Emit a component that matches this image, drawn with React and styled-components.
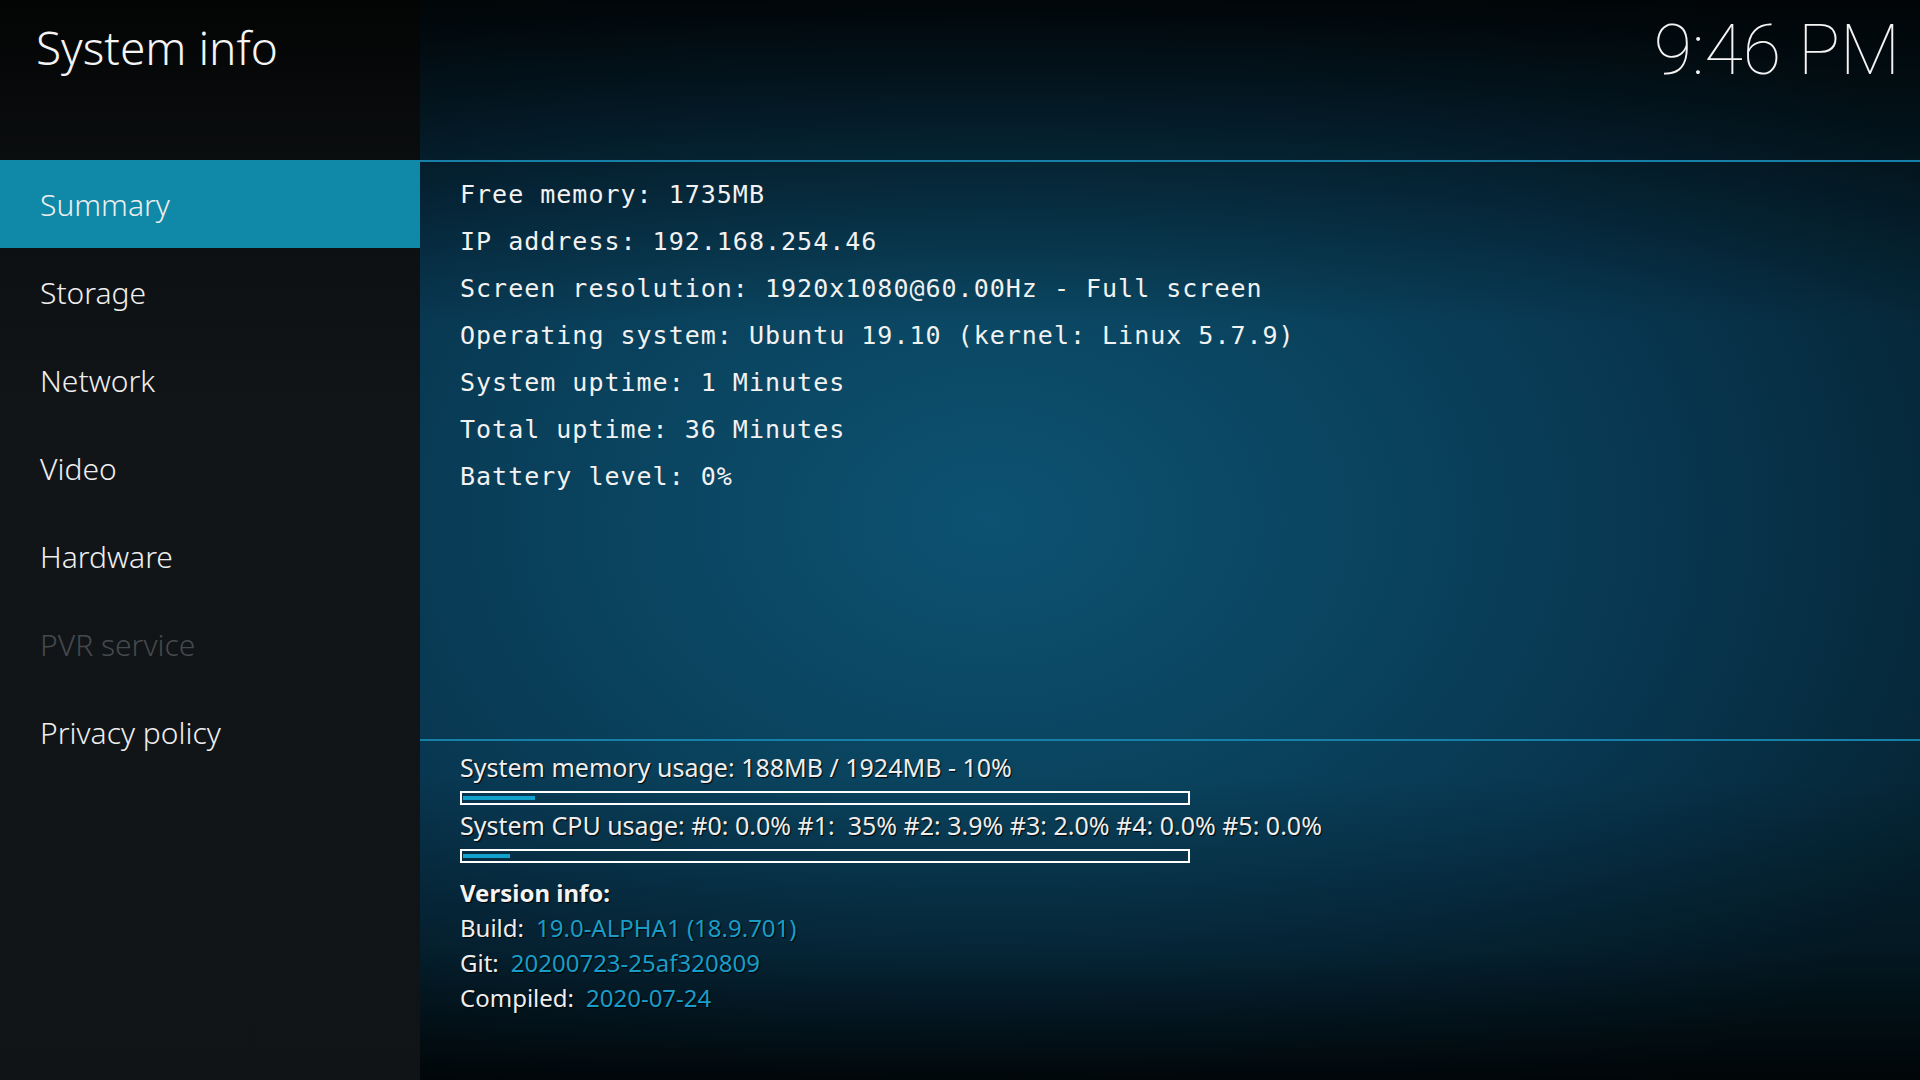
import React from "react";
import styled, { createGlobalStyle } from "styled-components";

const menu = [
  { label: "Summary", active: true },
  { label: "Storage" },
  { label: "Network" },
  { label: "Video" },
  { label: "Hardware" },
  { label: "PVR service", disabled: true },
  { label: "Privacy policy" },
];

const info = [
  "Free memory: 1735MB",
  "IP address: 192.168.254.46",
  "Screen resolution: 1920x1080@60.00Hz - Full screen",
  "Operating system: Ubuntu 19.10 (kernel: Linux 5.7.9)",
  "System uptime: 1 Minutes",
  "Total uptime: 36 Minutes",
  "Battery level: 0%",
];

const versions = [
  { label: "Build:", value: "19.0-ALPHA1 (18.9.701)" },
  { label: "Git:", value: "20200723-25af320809" },
  { label: "Compiled:", value: "2020-07-24" },
];

const GlobalStyle = createGlobalStyle`
  html, body {
    margin: 0;
    padding: 0;
    background: #000;
  }
  * {
    box-sizing: border-box;
  }
`;

const App = () => {
  return (
    <>
      <GlobalStyle />
      <Screen>
        <Sidebar>
          <Title>System info</Title>
          <Menu>
            {menu.map((m) => (
              <MenuItem key={m.label} $active={m.active} $disabled={m.disabled}>
                {m.label}
              </MenuItem>
            ))}
          </Menu>
        </Sidebar>
        <Main>
          <Header>
            <Clock>9:46 PM</Clock>
          </Header>
          <InfoList>
            {info.map((line) => (
              <InfoLine key={line}>{line}</InfoLine>
            ))}
          </InfoList>
          <Usage>
            <UsageLabel>System memory usage: 188MB / 1924MB - 10%</UsageLabel>
            <Bar>
              <Fill style={{ width: "10%" }} />
            </Bar>
            <UsageLabel>
              System CPU usage: #0: 0.0% #1:&nbsp; 35% #2: 3.9% #3: 2.0% #4: 0.0% #5: 0.0%
            </UsageLabel>
            <Bar>
              <Fill style={{ width: "6.5%" }} />
            </Bar>
            <VersionTitle>Version info:</VersionTitle>
            {versions.map((v) => (
              <VersionRow key={v.label}>
                {v.label}
                <VersionValue>{v.value}</VersionValue>
              </VersionRow>
            ))}
          </Usage>
        </Main>
      </Screen>
    </>
  );
};

const Screen = styled.div`
  width: 1920px;
  height: 1080px;
  display: flex;
  overflow: hidden;
  font-family: "Noto Sans", "Open Sans", sans-serif;
  color: #f2f2f2;
`;

const Sidebar = styled.div`
  width: 420px;
  flex: none;
  display: flex;
  flex-direction: column;
  background: linear-gradient(180deg, #030404 0%, #0c0f11 18%, #111518 40%, #101417 100%);
`;

const Title = styled.div`
  height: 160px;
  padding: 24px 0 0 36px;
  font-size: 46px;
  font-weight: 300;
  line-height: 46px;
  color: #f4f4f4;
`;

const Menu = styled.div`
  display: flex;
  flex-direction: column;
`;

const MenuItem = styled.div`
  height: 88px;
  display: flex;
  align-items: center;
  padding-left: 40px;
  font-size: 30px;
  font-weight: 300;
  color: ${(p) => (p.$disabled ? "#45494c" : "#eeeeee")};
  background: ${(p) => (p.$active ? "#1088a8" : "transparent")};
`;

const Main = styled.div`
  flex: 1;
  display: flex;
  flex-direction: column;
  background:
    linear-gradient(180deg, rgba(0, 0, 0, 0.88) 0%, rgba(0, 0, 0, 0.5) 12%, rgba(0, 0, 0, 0) 30%, rgba(0, 0, 0, 0) 72%, rgba(0, 0, 0, 0.35) 88%, rgba(0, 0, 0, 0.85) 100%),
    radial-gradient(ellipse 70% 70% at 38% 48%, #0d5272 0%, #0a445f 35%, #083650 65%, #052433 100%);
`;

const Header = styled.div`
  height: 162px;
  flex: none;
  display: flex;
  justify-content: flex-end;
  padding: 15px 20px 0 0;
  border-bottom: 2px solid #1680a8;
`;

const Clock = styled.div`
  font-family: "Roboto", "Lato", sans-serif;
  font-weight: 100;
  font-size: 70px;
  line-height: 70px;
  color: #f4f4f4;
`;

const InfoList = styled.div`
  height: 579px;
  flex: none;
  padding: 9px 0 0 40px;
  border-bottom: 2px solid #1680a8;
`;

const InfoLine = styled.div`
  font-family: "DejaVu Sans Mono", "Liberation Mono", monospace;
  font-size: 25px;
  line-height: 47px;
  letter-spacing: 1px;
  color: #f2f2f2;
  white-space: pre;
`;

const Usage = styled.div`
  flex: 1;
  display: flex;
  flex-direction: column;
  align-items: flex-start;
  padding: 10px 0 0 40px;
  text-shadow: 1px 1px 1px rgba(0, 0, 0, 0.9);
`;

const UsageLabel = styled.div`
  font-size: 25px;
  line-height: 33px;
  color: #eeeeee;
  white-space: pre;
`;

const Bar = styled.div`
  width: 730px;
  height: 14px;
  margin: 7px 0 4px;
  border: 2px solid #ffffff;
  padding: 3px 1px;
  display: flex;
`;

const Fill = styled.div`
  height: 4px;
  background: #12a0cc;
`;

const VersionTitle = styled.div`
  margin-top: 8px;
  font-size: 24px;
  font-weight: 700;
  line-height: 35px;
  color: #f4f4f4;
`;

const VersionRow = styled.div`
  font-size: 24px;
  line-height: 35px;
  color: #eeeeee;
`;

const VersionValue = styled.span`
  margin-left: 12px;
  color: #1a9cc8;
`;

export default App;
